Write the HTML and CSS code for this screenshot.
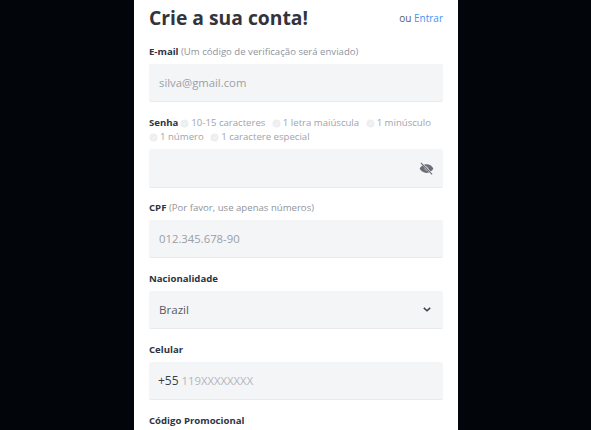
FILE: index.html
```html
<!DOCTYPE html>
<html lang="pt">
<head>
<meta charset="utf-8">
<title>Crie a sua conta</title>
<link rel="stylesheet" href="styles.css">
</head>
<body>
<main class="panel">
  <header class="head">
    <h1 class="title">Crie a sua conta!</h1>
    <div class="login">ou <a class="link" href="#">Entrar</a></div>
  </header>

  <div class="field field-email">
    <div class="label"><b>E-mail</b> <span class="hint">(Um código de verificação será enviado)</span></div>
    <div class="input"><span class="ph">silva@gmail.com</span></div>
  </div>

  <div class="field field-pass">
    <div class="label rules">
      <b>Senha</b>
      <span class="rule"><svg class="check" viewBox="0 0 10 10"><circle cx="5" cy="5" r="4.5"/><path d="M3 5l1.5 1.5L7 3.8"/></svg>10-15 caracteres</span>
      <span class="rule"><svg class="check" viewBox="0 0 10 10"><circle cx="5" cy="5" r="4.5"/><path d="M3 5l1.5 1.5L7 3.8"/></svg>1 letra maiúscula</span>
      <span class="rule"><svg class="check" viewBox="0 0 10 10"><circle cx="5" cy="5" r="4.5"/><path d="M3 5l1.5 1.5L7 3.8"/></svg>1 minúsculo</span>
      <span class="rule"><svg class="check" viewBox="0 0 10 10"><circle cx="5" cy="5" r="4.5"/><path d="M3 5l1.5 1.5L7 3.8"/></svg>1 número</span>
      <span class="rule"><svg class="check" viewBox="0 0 10 10"><circle cx="5" cy="5" r="4.5"/><path d="M3 5l1.5 1.5L7 3.8"/></svg>1 caractere especial</span>
    </div>
    <div class="input input-end input-tall">
      <svg class="eye" viewBox="0 0 24 24"><path d="M12 5C7 5 2.7 8.1 1 12c1.7 3.900 6 7 11 7s9.300-3.100 11-7c-1.700-3.900-6-7-11-7z"/><circle class="eye-hole" cx="12" cy="12" r="3.500"/><path class="eye-cut" d="M4 3.500l16.500 17"/><path class="eye-slash" d="M3 3l18 18.500"/></svg>
    </div>
  </div>

  <div class="field">
    <div class="label"><b>CPF</b> <span class="hint">(Por favor, use apenas números)</span></div>
    <div class="input"><span class="ph">012.345.678-90</span></div>
  </div>

  <div class="field">
    <div class="label"><b>Nacionalidade</b></div>
    <div class="input input-between">
      <span class="value">Brazil</span>
      <svg class="chev" viewBox="0 0 10 6"><path d="M1 1l4 3.500L9 1"/></svg>
    </div>
  </div>

  <div class="field">
    <div class="label"><b>Celular</b></div>
    <div class="input input-phone"><span class="prefix">+55</span> <span class="ph ph-light">119XXXXXXXX</span></div>
  </div>

  <div class="field field-last">
    <div class="label"><b>Código Promocional</b></div>
  </div>
</main>
</body>
</html>
```

FILE: styles.css
```css
* { box-sizing: border-box; }
html, body { height: 100%; }
body {
  margin: 0;
  background: #02050a;
  overflow: hidden;
  font-family: "Open Sans", "Liberation Sans", sans-serif;
  color: #2f3441;
}
.panel {
  width: 324px;
  height: 430px;
  margin-left: 134px;
  padding: 0 15px;
  background: #fff;
  overflow: hidden;
}
.head {
  display: flex;
  justify-content: space-between;
  align-items: center;
  height: 36px;
  margin-bottom: 8px;
}
.title {
  margin: 0;
  font-size: 19.3px;
  line-height: 36px;
  font-weight: 700;
  color: #33333b;
}
.login { font-size: 10px; color: #555c68; }
.link { color: #3f94f5; text-decoration: none; }
.field { margin-bottom: 13px; }
.field-email { margin-bottom: 14px; }
.field-pass { margin-bottom: 12px; }
.field-last { margin-bottom: 0; }
.label {
  font-size: 9.6px;
  line-height: 15px;
  margin-bottom: 5px;
  color: #2c3444;
  white-space: nowrap;
}
.label b { font-weight: 700; }
.hint { color: #8f949c; }
.rules {
  display: flex;
  flex-wrap: wrap;
  align-items: center;
  line-height: 14px;
  white-space: normal;
}
.rules b { margin-right: 2px; }
.rule {
  display: inline-flex;
  align-items: center;
  gap: 2px;
  margin-right: 6.5px;
  color: #a0a4ab;
}
.check { width: 9px; height: 9px; }
.check circle { fill: #eceef0; }
.check path { fill: none; stroke: #f8f9fa; stroke-width: 1; }
.input {
  display: flex;
  align-items: center;
  height: 38px;
  padding: 0 10px;
  background: #f4f5f7;
  border-bottom: 1px solid #e6e9ed;
  border-radius: 2px;
  font-size: 11.3px;
}
.input-tall { height: 39px; }
.input-end { justify-content: flex-end; padding-right: 9px; }
.input-between { justify-content: space-between; padding-right: 12px; }
.input-phone { padding-left: 9px; gap: 3px; }
.ph { color: #9b9fa6; }
.ph-light { color: #b3b6bb; }
.value { color: #555b66; font-size: 11.6px; }
.prefix { color: #3a404b; font-size: 12px; font-weight: 500; }
.eye { width: 15px; height: 15px; }
.eye path { fill: #6a6e74; }
.eye .eye-hole { fill: #94989e; }
.eye .eye-cut { fill: none; stroke: #f3f4f6; stroke-width: 2.600; }
.eye .eye-slash { fill: none; stroke: #6a6e74; stroke-width: 1.800; }
.chev { width: 8px; height: 5px; }
.chev path { fill: none; stroke: #3b4049; stroke-width: 1.900; }
```
